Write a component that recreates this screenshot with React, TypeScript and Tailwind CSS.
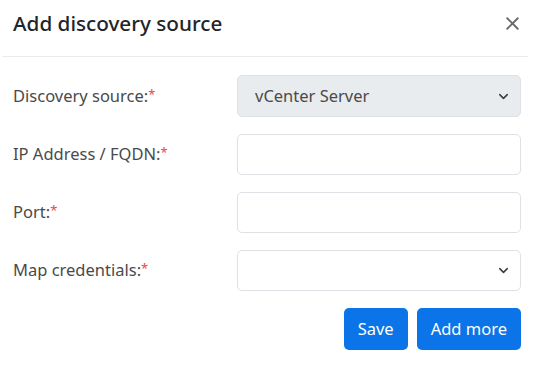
import { ChevronDown, X } from "lucide-react";

const Label = ({ text }: { text: string }) => (
  <label className="w-[224px] shrink-0 text-[16.5px] text-[#4a4a4a]">
    {text}
    <span className="relative -top-[3px] text-[13px] text-[#f0443c]">*</span>
  </label>
);

export default function App() {
  return (
    <div className="w-[545px] h-[367px] bg-white" style={{ fontFamily: '"Noto Sans", "Open Sans", sans-serif' }}>
      <div className="flex items-center justify-between pl-[13px] pr-[22px] h-[45px] pt-[2px]">
        <h2 className="text-[20.7px] font-medium text-[#212529]">Add discovery source</h2>
        <X className="w-[21px] h-[21px] text-[#6a6a6a]" strokeWidth={2.2} />
      </div>
      <div className="ml-[2px] mr-[17px] mt-[11px] border-t border-[#e9ecef]" />
      <div className="flex flex-col gap-[17px] pl-[13px] pr-[24px] pt-[18px]">
        <div className="flex items-center">
          <Label text="Discovery source:" />
          <div className="flex-1 h-[42px] rounded-[5px] border border-[#dee2e6] bg-[#e9ecef] flex items-center justify-between pl-[17px] pr-[9px]">
            <span className="text-[16.5px] text-[#4a4a4a]">vCenter Server</span>
            <ChevronDown className="w-[15px] h-[15px] text-[#343a40]" strokeWidth={2.3} />
          </div>
        </div>
        <div className="flex items-center">
          <Label text="IP Address / FQDN:" />
          <div className="flex-1 h-[41px] rounded-[5px] border border-[#dee2e6] bg-white" />
        </div>
        <div className="flex items-center">
          <Label text="Port:" />
          <div className="flex-1 h-[41px] rounded-[5px] border border-[#dee2e6] bg-white" />
        </div>
        <div className="flex items-center">
          <Label text="Map credentials:" />
          <div className="flex-1 h-[41px] rounded-[5px] border border-[#dee2e6] bg-white flex items-center justify-end pr-[9px]">
            <ChevronDown className="w-[15px] h-[15px] text-[#343a40]" strokeWidth={2.3} />
          </div>
        </div>
        <div className="flex justify-end gap-[9px]">
          <button className="h-[42px] px-[14px] rounded-[5px] bg-[#0a74e8] text-white text-[16.5px]">Save</button>
          <button className="h-[42px] px-[14px] rounded-[5px] bg-[#0a74e8] text-white text-[16.5px]">Add more</button>
        </div>
      </div>
    </div>
  );
}
